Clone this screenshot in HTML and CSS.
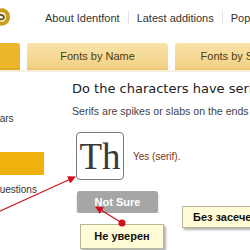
FILE: index.html
```html
<!DOCTYPE html>
<html lang="en">
<head>
    <meta charset="UTF-8">
    <title>Identifont - Appearance</title>
    <link rel="stylesheet" href="styles.css">
</head>
<body>
    <div class="header">
        <svg class="logo" width="10" height="18" viewBox="0 0 10 18">
            <path d="M-2 3 C4 1 8 4 8 9 C8 14 4 17 -2 15" stroke="#c99e1c" stroke-width="4" fill="none"/>
            <path d="M-2 7 C2 6 4 8 4 9 C4 11 2 12 -2 11" stroke="#6b5a1e" stroke-width="2" fill="none"/>
        </svg>
        <div class="nav">
            <a href="#">About Identfont</a>
            <span class="sep"></span>
            <a href="#">Latest additions</a>
            <span class="sep"></span>
            <a href="#">Popular fonts</a>
        </div>
    </div>

    <div class="tabs">
        <div class="tab active">Appearance</div>
        <div class="tab">Fonts by Name</div>
        <div class="tab">Fonts by Similarity</div>
    </div>

    <div class="main">
        <div class="sidebar">
            <div class="side-item first">Similars</div>
            <div class="side-bar">Shape</div>
            <div class="side-item">Answer questions</div>
        </div>
        <div class="content">
            <h1>Do the characters have serifs?</h1>
            <p class="hint">Serifs are spikes or slabs on the ends of the strokes.</p>
            <div class="options">
                <div class="option">
                    <div class="sample">Th</div>
                    <span class="answer">Yes (serif).</span>
                </div>
                <div class="option">
                    <div class="sample sans">Th</div>
                    <span class="answer">No (sans serif).</span>
                </div>
            </div>
            <button class="not-sure">Not Sure</button>
        </div>
    </div>

    <!-- annotations drawn over the screenshot -->
    <div class="notes">
        <svg class="arrows" width="250" height="250" viewBox="0 0 250 250">
            <defs>
                <marker id="head" markerWidth="8" markerHeight="8" refX="7" refY="4" orient="auto" markerUnits="userSpaceOnUse">
                    <path d="M0 0 L8 4 L0 8 Z" fill="#d0101a"/>
                </marker>
            </defs>
            <line x1="-2" y1="212" x2="75" y2="177" stroke="#d0101a" stroke-width="1.2" marker-end="url(#head)"/>
            <line x1="122" y1="223" x2="96" y2="207" stroke="#d0101a" stroke-width="1.2" marker-end="url(#head)"/>
            <circle cx="122" cy="223" r="3.5" fill="#d0101a"/>
        </svg>
        <div class="callout c1">Не уверен</div>
        <div class="callout c2">Без засечек</div>
    </div>
</body>
</html>
```

FILE: styles.css
```css
html, body {
    overflow: hidden;
}
body {
    margin: 0;
    font-family: "Liberation Sans", Arial, sans-serif;
    background-color: #fff;
    color: #333;
}
.header {
    display: flex;
    align-items: center;
    height: 35px;
}
.logo {
    display: block;
    flex-shrink: 0;
    margin-top: -2px;
}
.nav {
    display: flex;
    align-items: center;
    gap: 8px;
    margin-left: 35px;
    font-size: 11px;
    white-space: nowrap;
}
.nav a {
    color: #333;
    text-decoration: none;
}
.sep {
    flex-shrink: 0;
    width: 1px;
    height: 13px;
    background-color: #e2e2e2;
}
.tabs {
    display: flex;
    gap: 7px;
    margin-top: 8px;
    margin-left: -121px;
    height: 27px;
}
.tab {
    flex: 0 0 141px;
    box-sizing: border-box;
    border-radius: 3px 3px 0 0;
    background: linear-gradient(#fae3a9, #f1d184);
    border-bottom: 2px solid #ecc777;
    color: #4d3b12;
    font-size: 11px;
    line-height: 26px;
    text-align: center;
    white-space: nowrap;
}
.tab.active {
    background: #ebb62c;
    border-bottom-color: #deaa22;
}
.main {
    display: flex;
    border-top: 2px solid #f6efdc;
}
.sidebar {
    flex: 0 0 86px;
    margin-left: -42px;
    padding-top: 32px;
    font-size: 10px;
    line-height: 14px;
    color: #333;
    white-space: nowrap;
}
.side-item.first {
    padding-left: 20px;
}
.side-bar {
    margin-top: 26px;
    height: 23px;
    padding-left: 4px;
    background-color: #efb20c;
    color: #efb20c;
    line-height: 23px;
}
.side-item {
    margin-top: 8px;
}
.content {
    margin-left: 28px;
    padding-top: 9px;
    white-space: nowrap;
}
h1 {
    margin: 0;
    font-family: "DejaVu Sans", Verdana, sans-serif;
    font-size: 13px;
    font-weight: normal;
    line-height: 16px;
    color: #222;
}
.hint {
    margin: 7px 0 0;
    font-size: 10.6px;
    line-height: 14px;
    color: #444;
}
.options {
    display: flex;
    margin-top: 14px;
}
.option {
    display: flex;
    align-items: center;
    flex: 0 0 175px;
}
.sample {
    width: 46px;
    height: 46px;
    margin-left: 4px;
    border: 1px solid #7a7a7a;
    border-radius: 4px;
    font-family: "Liberation Serif", "Times New Roman", serif;
    font-size: 37px;
    line-height: 48px;
    text-align: center;
    color: #3a3a3a;
}
.sample.sans {
    font-family: "Liberation Sans", Arial, sans-serif;
}
.answer {
    margin-left: 9px;
    font-size: 10px;
    color: #7c3318;
}
.not-sure {
    display: block;
    width: 81px;
    height: 22px;
    margin: 11px 0 0 5px;
    padding: 0;
    border: none;
    border-radius: 3px;
    background-color: #a6a6a6;
    box-shadow: 0 2px 2px rgba(0,0,0,0.25);
    color: #fff;
    font-family: "Liberation Sans", Arial, sans-serif;
    font-size: 11px;
    font-weight: bold;
}
.notes {
    position: absolute;
    top: 0;
    left: 0;
    width: 250px;
    height: 250px;
    pointer-events: none;
}
.arrows {
    position: absolute;
    top: 0;
    left: 0;
    z-index: 2;
}
.callout {
    position: absolute;
    box-sizing: border-box;
    border: 1px solid #b9b59a;
    background-color: #fffbd6;
    box-shadow: 2px 2px 2px rgba(0,0,0,0.3);
    color: #111;
    font-size: 11px;
    font-weight: bold;
    white-space: nowrap;
}
.c1 {
    left: 80px;
    top: 224px;
    width: 84px;
    height: 25px;
    line-height: 23px;
    text-align: center;
}
.c2 {
    left: 182px;
    top: 206px;
    width: 92px;
    height: 22px;
    line-height: 20px;
    padding-left: 10px;
}
```
